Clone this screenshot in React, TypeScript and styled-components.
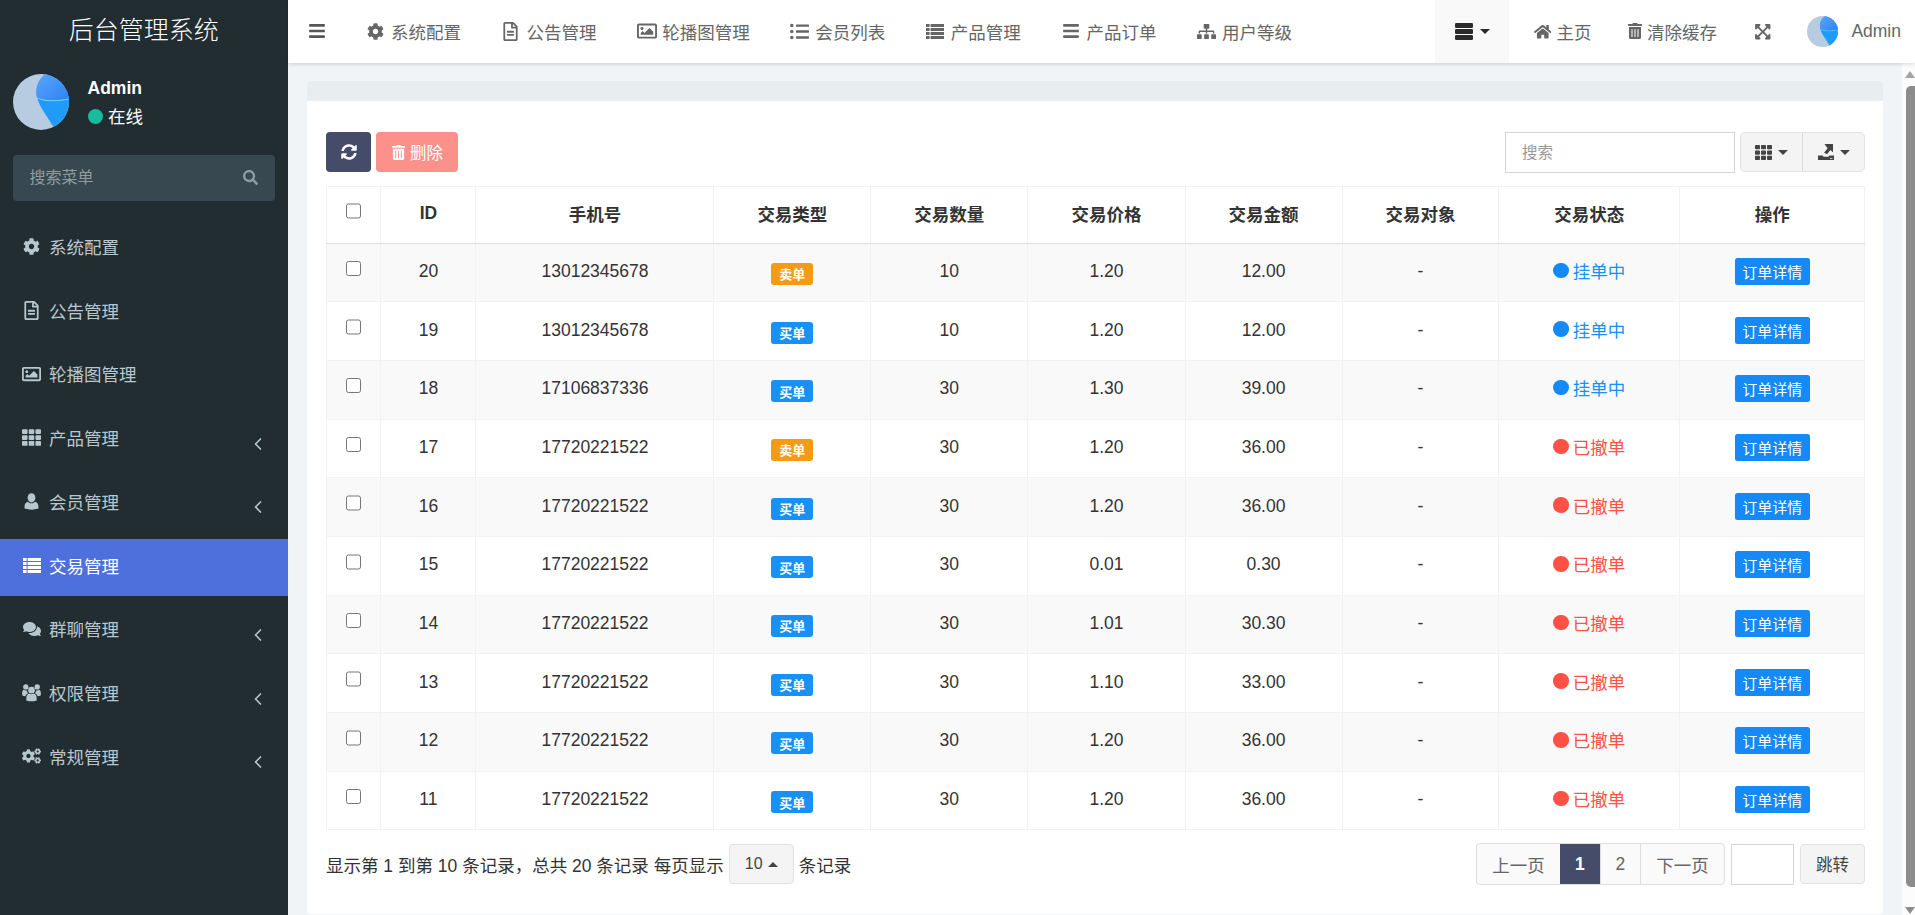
import React from "react";
import styled, { createGlobalStyle } from "styled-components";
import { ChevronLeft } from "lucide-react";
import {
  FaBars,
  FaCog,
  FaCogs,
  FaComments,
  FaExpandArrowsAlt,
  FaHome,
  FaListUl,
  FaRegFileAlt,
  FaRegImage,
  FaSearch,
  FaSitemap,
  FaSyncAlt,
  FaTh,
  FaTrashAlt,
} from "react-icons/fa";

const FONT = `"Liberation Sans", "Noto Sans CJK SC", sans-serif`;

const GlobalStyle = createGlobalStyle`
  html, body {
    margin: 0;
    height: 100%;
    overflow: hidden;
    font-family: ${FONT};
    font-size: 17.5px;
    color: #333;
    background: #f1f4f6;
  }
  * { box-sizing: border-box; }
`;

function RowsIcon() {
  return (
    <svg width="18" height="15" viewBox="0 0 18 15" fill="currentColor">
      {[0, 4, 8, 12].map((y) => (
        <g key={y}>
          <rect x="0" y={y} width="3.6" height="3" />
          <rect x="4.6" y={y} width="13.4" height="3" />
        </g>
      ))}
    </svg>
  );
}

function UserIcon() {
  return (
    <svg width="15" height="17" viewBox="0 0 15 17" fill="currentColor">
      <ellipse cx="7.5" cy="4.8" rx="3.9" ry="4.6" />
      <path d="M.6 15.6C0 11 1.8 9.2 4 8.8c2 2 5 2 7 0 2.2.4 4 2.2 3.4 6.8Q7.5 17.8.6 15.6Z" />
    </svg>
  );
}

function UsersIcon() {
  return (
    <svg width="20" height="19" viewBox="0 0 20 19" fill="currentColor">
      <circle cx="10" cy="7" r="3.5" />
      <circle cx="4" cy="3.6" r="2.8" />
      <circle cx="16" cy="3.6" r="2.8" />
      <path d="M4.6 17.8c-.5-4.8 1-6.8 3-7.3 1.5 1 3.3 1 4.8 0 2 .5 3.5 2.5 3 7.3Q10 19.6 4.6 17.8Z" />
      <path d="M.2 12.4C-.2 8.6.8 7 2 6.7c1 .7 2 .8 3 .4.2 1.3.7 2.4 1.5 3.1-1.6.7-2.6 1.9-2.9 3.3Q1.500 13.300.2 12.400Z" />
      <path d="M19.800 12.400C20.200 8.600 19.200 7 18 6.700c-1 .7-2 .8-3 .4-.2 1.300-.7 2.400-1.500 3.100 1.600.7 2.600 1.900 2.900 3.300Q18.500 13.300 19.800 12.400Z" />
    </svg>
  );
}

function ExportIcon() {
  return (
    <svg width="16" height="16" viewBox="0 0 16 16" fill="currentColor">
      <path d="M0 11.5h4.500l1.200 1.200h4.600l1.200-1.200H16V16H0zM12 14v.8h2.500V14z" fillRule="evenodd" />
      <path d="M6.500 0H15v8.500l-2.600-2.600-3.300 4.300-3-1.500 3.500-4.400z" />
    </svg>
  );
}

function ServerIcon() {
  return (
    <svg width="18" height="17" viewBox="0 0 18 17" fill="currentColor">
      <rect x="0" y="0" width="18" height="5" rx="1.2" />
      <rect x="0" y="6" width="18" height="5" rx="1.2" />
      <rect x="0" y="12" width="18" height="5" rx="1.2" />
    </svg>
  );
}

const sideMenu = [
  { label: "系统配置", icon: <FaCog size={17} /> },
  { label: "公告管理", icon: <FaRegFileAlt size={19} /> },
  { label: "轮播图管理", icon: <FaRegImage size={20} /> },
  { label: "产品管理", icon: <FaTh size={19} />, more: true },
  { label: "会员管理", icon: <UserIcon />, more: true },
  { label: "交易管理", icon: <RowsIcon />, active: true },
  { label: "群聊管理", icon: <FaComments size={18} />, more: true },
  { label: "权限管理", icon: <UsersIcon />, more: true },
  { label: "常规管理", icon: <FaCogs size={20} />, more: true },
];

const topMenu = [
  { label: "系统配置", icon: <FaCog size={17} /> },
  { label: "公告管理", icon: <FaRegFileAlt size={19} /> },
  { label: "轮播图管理", icon: <FaRegImage size={20} /> },
  { label: "会员列表", icon: <FaListUl size={19} /> },
  { label: "产品管理", icon: <RowsIcon /> },
  { label: "产品订单", icon: <FaBars size={18} /> },
  { label: "用户等级", icon: <FaSitemap size={19} /> },
];

const columns = [
  { title: "", width: 54.4 },
  { title: "ID", width: 95.1 },
  { title: "手机号", width: 238 },
  { title: "交易类型", width: 156.8 },
  { title: "交易数量", width: 157.1 },
  { title: "交易价格", width: 157.2 },
  { title: "交易金额", width: 157 },
  { title: "交易对象", width: 156.8 },
  { title: "交易状态", width: 181 },
  { title: "操作", width: 184.6 },
];

type Order = {
  id: number;
  phone: string;
  sell?: boolean;
  qty: number;
  price: string;
  total: string;
  cancelled?: boolean;
};

const orders: Order[] = [
  { id: 20, phone: "13012345678", sell: true, qty: 10, price: "1.20", total: "12.00" },
  { id: 19, phone: "13012345678", qty: 10, price: "1.20", total: "12.00" },
  { id: 18, phone: "17106837336", qty: 30, price: "1.30", total: "39.00" },
  { id: 17, phone: "17720221522", sell: true, qty: 30, price: "1.20", total: "36.00", cancelled: true },
  { id: 16, phone: "17720221522", qty: 30, price: "1.20", total: "36.00", cancelled: true },
  { id: 15, phone: "17720221522", qty: 30, price: "0.01", total: "0.30", cancelled: true },
  { id: 14, phone: "17720221522", qty: 30, price: "1.01", total: "30.30", cancelled: true },
  { id: 13, phone: "17720221522", qty: 30, price: "1.10", total: "33.00", cancelled: true },
  { id: 12, phone: "17720221522", qty: 30, price: "1.20", total: "36.00", cancelled: true },
  { id: 11, phone: "17720221522", qty: 30, price: "1.20", total: "36.00", cancelled: true },
];

function Avatar({ size }: { size: number }) {
  return (
    <AvatarSvg width={size} height={size} viewBox="0 0 56 56">
      <defs>
        <clipPath id="avatarClip">
          <circle cx="28" cy="28" r="28" />
        </clipPath>
        <linearGradient id="avatarTop" x1="0" y1="0" x2="1" y2="1">
          <stop offset="0" stopColor="#5ba6fa" />
          <stop offset="1" stopColor="#2c82f6" />
        </linearGradient>
      </defs>
      <g clipPath="url(#avatarClip)">
        <rect width="56" height="56" fill="#b7cbe1" />
        <path d="M33 0C25 5 22 14 24 24C28 36 36 44 42 56H56V0Z" fill="#1f9cfb" />
        <path d="M33 0C25 5 22 14 24 24C32 28 46 27 56 25V0Z" fill="url(#avatarTop)" />
        <path d="M24 24C32 28 46 27 56 25" fill="none" stroke="#79d3ff" strokeWidth="1" />
      </g>
    </AvatarSvg>
  );
}

export default function App(): JSX.Element {
  return (
    <Page>
      <GlobalStyle />
      <Sidebar>
        <Logo>后台管理系统</Logo>
        <UserPanel>
          <Avatar size={56} />
          <UserInfo>
            <UserName>Admin</UserName>
            <UserStatus>
              <OnlineDot />
              在线
            </UserStatus>
          </UserInfo>
        </UserPanel>
        <SideSearch>
          <SideSearchInput placeholder="搜索菜单" />
          <FaSearch />
        </SideSearch>
        <SideMenu>
          {sideMenu.map((item) => (
            <SideItem key={item.label} $active={item.active}>
              <SideIcon>{item.icon}</SideIcon>
              {item.label}
              {item.more && (
                <SideArrow>
                  <ChevronLeft size={20} strokeWidth={2} />
                </SideArrow>
              )}
            </SideItem>
          ))}
        </SideMenu>
      </Sidebar>
      <Main>
        <Header>
          <Burger>
            <FaBars />
          </Burger>
          <TopNav>
            {topMenu.map((item) => (
              <TopItem key={item.label}>
                <TopIcon>{item.icon}</TopIcon>
                {item.label}
              </TopItem>
            ))}
          </TopNav>
          <TopRight>
            <TopDropdown>
              <ServerIcon />
              <Caret />
            </TopDropdown>
            <HomeLink>
              <FaHome />
              主页
            </HomeLink>
            <TrashLink>
              <FaTrashAlt size={16} />
              清除缓存
            </TrashLink>
            <ExpandLink>
              <FaExpandArrowsAlt />
            </ExpandLink>
            <TopUser>
              <Avatar size={31} />
              Admin
            </TopUser>
          </TopRight>
        </Header>
        <Body>
          <Content>
            <Panel>
              <PanelHeading />
              <PanelBody>
                <Toolbar>
                  <ToolLeft>
                    <RefreshButton>
                      <FaSyncAlt />
                    </RefreshButton>
                    <DeleteButton>
                      <FaTrashAlt />
                      删除
                    </DeleteButton>
                  </ToolLeft>
                  <ToolRight>
                    <SearchInput placeholder="搜索" />
                    <ButtonGroup>
                      <GroupButton>
                        <FaTh />
                        <Caret />
                      </GroupButton>
                      <GroupButton>
                        <ExportIcon />
                        <Caret />
                      </GroupButton>
                    </ButtonGroup>
                  </ToolRight>
                </Toolbar>
                <Table>
                  <thead>
                    <tr>
                      {columns.map((col, i) => (
                        <HeadCell key={i} $width={col.width}>
                          {i === 0 ? <Check type="checkbox" /> : col.title}
                        </HeadCell>
                      ))}
                    </tr>
                  </thead>
                  <tbody>
                    {orders.map((o) => (
                      <Row key={o.id}>
                        <Cell>
                          <Check type="checkbox" />
                        </Cell>
                        <Cell>{o.id}</Cell>
                        <Cell>{o.phone}</Cell>
                        <Cell>
                          <TypeBadge $sell={o.sell}>{o.sell ? "卖单" : "买单"}</TypeBadge>
                        </Cell>
                        <Cell>{o.qty}</Cell>
                        <Cell>{o.price}</Cell>
                        <Cell>{o.total}</Cell>
                        <Cell>-</Cell>
                        <Cell>
                          <Status $cancelled={o.cancelled}>
                            <StatusDot $cancelled={o.cancelled} />
                            {o.cancelled ? "已撤单" : "挂单中"}
                          </Status>
                        </Cell>
                        <Cell>
                          <DetailButton>订单详情</DetailButton>
                        </Cell>
                      </Row>
                    ))}
                  </tbody>
                </Table>
                <Footer>
                  <PageInfo>
                    显示第 1 到第 10 条记录，总共 20 条记录 每页显示
                    <PageSize>
                      10
                      <CaretUp />
                    </PageSize>
                    条记录
                  </PageInfo>
                  <PagerWrap>
                    <Pager>
                      <PagerItem>上一页</PagerItem>
                      <PagerNumber $active>1</PagerNumber>
                      <PagerNumber>2</PagerNumber>
                      <PagerItem>下一页</PagerItem>
                    </Pager>
                    <JumpInput />
                    <JumpButton>跳转</JumpButton>
                  </PagerWrap>
                </Footer>
              </PanelBody>
            </Panel>
          </Content>
          <ScrollTrack>
            <ArrowUp />
            <ScrollThumb />
            <ArrowDown />
          </ScrollTrack>
        </Body>
      </Main>
    </Page>
  );
}

const Page = styled.div`
  display: flex;
  width: 1915px;
  height: 915px;
  overflow: hidden;
`;

const AvatarSvg = styled.svg`
  flex: none;
  display: block;
`;

const Sidebar = styled.aside`
  flex: none;
  width: 287.5px;
  height: 100%;
  background: #222d32;
  color: #b8c7ce;
`;

const Logo = styled.div`
  height: 62.5px;
  line-height: 60px;
  text-align: center;
  font-size: 25px;
  font-weight: 300;
  color: #fff;
`;

const UserPanel = styled.div`
  display: flex;
  align-items: center;
  gap: 19px;
  padding: 11.5px 12.5px;
`;

const UserInfo = styled.div`
  display: flex;
  flex-direction: column;
  gap: 9px;
  color: #fff;
`;

const UserName = styled.div`
  font-weight: bold;
  line-height: 20px;
`;

const UserStatus = styled.div`
  display: flex;
  align-items: center;
  gap: 5px;
  line-height: 20px;
`;

const OnlineDot = styled.span`
  width: 15.5px;
  height: 15.5px;
  border-radius: 50%;
  background: #18bc9c;
`;

const SideSearch = styled.div`
  display: flex;
  align-items: center;
  height: 46px;
  margin: 13px 12.5px 0;
  padding: 0 17px;
  border-radius: 4px;
  background: #374850;
  color: #8f9da3;
  font-size: 15px;

  svg {
    flex: none;
  }
`;

const SideSearchInput = styled.input`
  flex: 1;
  min-width: 0;
  border: 0;
  outline: 0;
  background: transparent;
  padding: 0;
  font-family: ${FONT};
  font-size: 16px;
  color: #ccc;

  &::placeholder {
    color: #8f9da3;
    opacity: 1;
  }
`;

const SideMenu = styled.ul`
  list-style: none;
  margin: 19.5px 0 0;
  padding: 0;
  display: flex;
  flex-direction: column;
  gap: 6.25px;
`;

const SideItem = styled.li<{ $active?: boolean }>`
  display: flex;
  align-items: center;
  height: 57.5px;
  padding: 0 0 5px 22px;
  background: ${(p) => (p.$active ? "#4d70dc" : "transparent")};
  color: ${(p) => (p.$active ? "#fff" : "#b8c7ce")};
`;

const SideIcon = styled.span`
  display: flex;
  justify-content: center;
  width: 19px;
  margin-right: 8px;
`;

const SideArrow = styled.span`
  display: flex;
  margin-left: auto;
  margin-right: 20px;
  margin-top: 12px;
`;

const Main = styled.div`
  flex: 1;
  min-width: 0;
  display: flex;
  flex-direction: column;
`;

const Header = styled.header`
  position: relative;
  z-index: 2;
  flex: none;
  display: flex;
  align-items: center;
  height: 62.5px;
  padding-right: 14px;
  background: #fff;
  box-shadow: 0 1px 4px rgba(0, 0, 0, 0.16);
  color: #666;
`;

const Burger = styled.div`
  display: flex;
  margin-left: 20.5px;
  font-size: 18px;
  color: #555;
`;

const TopNav = styled.nav`
  display: flex;
  gap: 40px;
  margin-left: 39.4px;
`;

const TopItem = styled.a`
  display: flex;
  align-items: center;
  gap: 5.6px;
  white-space: nowrap;
`;

const TopIcon = styled.span`
  display: flex;
  justify-content: center;
  width: 20px;
`;

const TopRight = styled.div`
  display: flex;
  align-items: center;
  height: 100%;
  margin-left: auto;
`;

const TopDropdown = styled.div`
  display: flex;
  align-items: center;
  gap: 7px;
  height: 100%;
  width: 74px;
  padding-left: 20px;
  background: #f9f9f9;
  color: #2b2b2b;
`;

const TopLink = styled.a`
  display: flex;
  align-items: center;
  gap: 5px;
  white-space: nowrap;
`;

const HomeLink = styled(TopLink)`
  margin-left: 24.5px;
`;

const TrashLink = styled(TopLink)`
  gap: 4px;
  margin-left: 35.5px;
`;

const ExpandLink = styled(TopLink)`
  margin-left: 37px;
`;

const TopUser = styled(TopLink)`
  gap: 13px;
  margin-left: 36px;
`;

const Caret = styled.span`
  width: 0;
  height: 0;
  border-left: 5px solid transparent;
  border-right: 5px solid transparent;
  border-top: 5px solid currentColor;
`;

const CaretUp = styled.span`
  width: 0;
  height: 0;
  border-left: 5px solid transparent;
  border-right: 5px solid transparent;
  border-bottom: 5px solid #444;
`;

const Body = styled.div`
  flex: 1;
  min-height: 0;
  display: flex;
`;

const Content = styled.main`
  flex: 1;
  min-width: 0;
  padding: 18.5px 19px 1px 19.5px;
  background: #f1f4f6;
`;

const Panel = styled.section`
  height: 100%;
  display: flex;
  flex-direction: column;
  background: #fff;
  border-radius: 4px;
  overflow: hidden;
`;

const PanelHeading = styled.div`
  flex: none;
  height: 20px;
  background: #e8edf0;
`;

const PanelBody = styled.div`
  flex: 1;
  padding: 31px 18px 0 19px;
`;

const Toolbar = styled.div`
  display: flex;
  justify-content: space-between;
  height: 40px;
  margin-bottom: 14px;
`;

const ToolLeft = styled.div`
  display: flex;
  gap: 5px;
`;

const ToolRight = styled.div`
  display: flex;
  gap: 5px;
`;

const RefreshButton = styled.button`
  display: flex;
  align-items: center;
  justify-content: center;
  width: 45px;
  height: 40px;
  border: 0;
  border-radius: 4px;
  background: #444c69;
  color: #fff;
  font-size: 16px;
`;

const DeleteButton = styled.button`
  display: flex;
  align-items: center;
  justify-content: center;
  gap: 4px;
  width: 82px;
  height: 40px;
  border: 0;
  border-radius: 4px;
  background: #fc908a;
  color: #fff;
  font-family: ${FONT};
  font-size: 16.5px;

  svg {
    font-size: 15px;
  }
`;

const SearchInput = styled.input`
  width: 230px;
  height: 41px;
  padding: 0 16px;
  border: 1px solid #d2d6e0;
  outline: 0;
  font-family: ${FONT};
  font-size: 15.5px;

  &::placeholder {
    color: #999;
    opacity: 1;
  }
`;

const ButtonGroup = styled.div`
  display: flex;
  width: 125px;
  height: 40px;
  border: 1px solid #e2e2e2;
  border-radius: 5px;
  background: #f4f4f4;
  overflow: hidden;
`;

const GroupButton = styled.button`
  flex: 1;
  display: flex;
  align-items: center;
  justify-content: center;
  gap: 6px;
  padding: 0;
  border: 0;
  background: transparent;
  color: #444;
  font-size: 17px;

  & + & {
    border-left: 1px solid #dcdcdc;
  }
`;

const Table = styled.table`
  width: 1538px;
  table-layout: fixed;
  border-collapse: collapse;
  border: 1px solid #f2f2f2;
`;

const HeadCell = styled.th<{ $width: number }>`
  width: ${(p) => p.$width}px;
  height: 56.5px;
  padding: 0 0 2px;
  border: 1px solid #f2f2f2;
  border-bottom: 1px solid #ddd;
  font-size: 17.5px;
  font-weight: bold;
  text-align: center;
  color: #333;
`;

const Row = styled.tr`
  height: 58.7px;

  &:nth-child(odd) {
    background: #f9f9f9;
  }
`;

const Cell = styled.td`
  padding: 0 0 2px;
  border: 1px solid #f2f2f2;
  text-align: center;
  color: #333;
`;

const Check = styled.input`
  display: block;
  width: 15.5px;
  height: 15.5px;
  margin: 0 auto 6px;
`;

const TypeBadge = styled.span<{ $sell?: boolean }>`
  display: inline-flex;
  align-items: center;
  justify-content: center;
  width: 42px;
  height: 22px;
  margin-top: 5px;
  border-radius: 3px;
  background: ${(p) => (p.$sell ? "#f39c12" : "#1890f5")};
  color: #fff;
  font-size: 13px;
  font-weight: bold;
`;

const Status = styled.span<{ $cancelled?: boolean }>`
  display: inline-flex;
  align-items: center;
  gap: 4px;
  margin-bottom: 2px;
  color: ${(p) => (p.$cancelled ? "#ff5145" : "#1890f5")};
`;

const StatusDot = styled.i<{ $cancelled?: boolean }>`
  width: 15.5px;
  height: 15.5px;
  border-radius: 50%;
  background: ${(p) => (p.$cancelled ? "#ff5145" : "#1589f5")};
`;

const DetailButton = styled.button`
  width: 75px;
  height: 27px;
  padding: 0;
  border: 0;
  border-radius: 2.5px;
  background: #1589f5;
  color: #fff;
  font-family: ${FONT};
  font-size: 15px;
`;

const Footer = styled.div`
  display: flex;
  justify-content: space-between;
  align-items: center;
  margin-top: 13px;
`;

const PageInfo = styled.div`
  display: flex;
  align-items: center;
  gap: 5px;
  white-space: pre;
  font-size: 17.5px;
`;

const PageSize = styled.div`
  display: flex;
  align-items: center;
  justify-content: center;
  gap: 5px;
  width: 65px;
  height: 40px;
  border: 1px solid #e0e0e0;
  border-radius: 4px;
  background: #f4f4f4;
  color: #444;
  font-size: 16px;
`;

const PagerWrap = styled.div`
  display: flex;
  align-items: center;
`;

const Pager = styled.div`
  display: flex;
  height: 42px;
  border: 1px solid #ddd;
  border-radius: 4px;
  background: #fafafa;
  overflow: hidden;
  color: #666;
`;

const PagerItem = styled.a`
  display: flex;
  align-items: center;
  justify-content: center;
  width: 83px;
`;

const PagerNumber = styled(PagerItem)<{ $active?: boolean }>`
  width: 40.5px;
  border-right: 1px solid #ddd;
  background: ${(p) => (p.$active ? "#444c69" : "transparent")};
  color: ${(p) => (p.$active ? "#fff" : "#666")};
  font-weight: ${(p) => (p.$active ? "bold" : "normal")};
`;

const JumpInput = styled.input`
  width: 63px;
  height: 41px;
  margin-left: 6px;
  border: 1px solid #d2d6e0;
  outline: 0;
`;

const JumpButton = styled.button`
  width: 65px;
  height: 40px;
  margin-left: 6px;
  padding: 0;
  border: 1px solid #e2e2e2;
  border-radius: 4px;
  background: #f4f4f4;
  color: #444;
  font-family: ${FONT};
  font-size: 16.5px;
`;

const ScrollTrack = styled.div`
  flex: none;
  width: 13px;
  display: flex;
  flex-direction: column;
  align-items: flex-end;
  padding: 8px 0 1px;
  background: #fcfcfc;
`;

const ArrowUp = styled.span`
  width: 0;
  height: 0;
  border-left: 5px solid transparent;
  border-right: 5px solid transparent;
  border-bottom: 7px solid #a3a3a3;
`;

const ScrollThumb = styled.div`
  flex: 1;
  width: 9px;
  margin: 8px 0 20px;
  border-radius: 5px 0 0 5px;
  background: #8c8c8c;
`;

const ArrowDown = styled.span`
  width: 0;
  height: 0;
  border-left: 5px solid transparent;
  border-right: 5px solid transparent;
  border-top: 7px solid #8c8c8c;
`;
